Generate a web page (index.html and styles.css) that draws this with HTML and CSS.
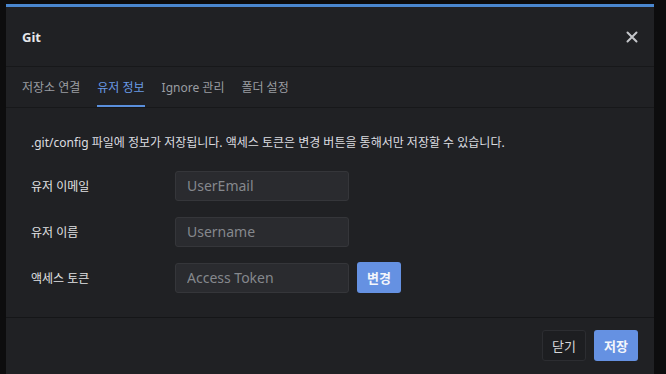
FILE: index.html
```html
<!DOCTYPE html>
<html lang="ko">
<head>
<meta charset="utf-8">
<link rel="stylesheet" href="styles.css">
</head>
<body>
<div class="modal">
  <div class="header">
    <span class="title">Git</span>
    <button class="close" aria-label="닫기">
      <svg width="12" height="12" viewBox="0 0 12 12"><path d="M1.5 1.5L10.5 10.5M10.5 1.5L1.5 10.5" stroke="#c4c6ca" stroke-width="2" stroke-linecap="round"/></svg>
    </button>
  </div>
  <div class="tabs">
    <div class="tab">저장소 연결</div>
    <div class="tab active">유저 정보</div>
    <div class="tab">Ignore 관리</div>
    <div class="tab">폴더 설정</div>
  </div>
  <div class="body">
    <p class="desc">.git/config 파일에 정보가 저장됩니다. 액세스 토큰은 변경 버튼을 통해서만 저장할 수 있습니다.</p>
    <div class="row">
      <label class="label">유저 이메일</label>
      <input class="input" placeholder="UserEmail">
    </div>
    <div class="row">
      <label class="label">유저 이름</label>
      <input class="input" placeholder="Username">
    </div>
    <div class="row">
      <label class="label">액세스 토큰</label>
      <input class="input" placeholder="Access Token">
      <button class="btn primary">변경</button>
    </div>
  </div>
  <div class="footer">
    <button class="btn ghost">닫기</button>
    <button class="btn primary">저장</button>
  </div>
</div>
</body>
</html>
```
FILE: styles.css
```css
* { box-sizing: border-box; }
html, body { margin: 0; padding: 0; }
body {
  background: #0d0d0e;
  height: 374px;
  overflow: hidden;
  font-family: "Noto Sans", "Noto Sans CJK KR", sans-serif;
  padding: 4px 12px 0 6px;
}
.modal {
  width: 648px;
  height: 370px;
  background: #202124;
  border-top: 3px solid #4a87cf;
  display: flex;
  flex-direction: column;
  overflow: hidden;
}
.header {
  height: 60px;
  flex: none;
  display: flex;
  align-items: center;
  justify-content: space-between;
  padding: 0 16px;
  border-bottom: 1px solid #17181a;
}
.title {
  color: #e6e7e9;
  font-size: 13px;
  font-weight: 700;
}
.close {
  background: none;
  border: 0;
  padding: 0;
  width: 12px;
  height: 12px;
  display: flex;
}
.tabs {
  height: 41px;
  flex: none;
  display: flex;
  gap: 17px;
  padding: 0 16px;
  border-bottom: 1px solid #17181a;
}
.tab {
  font-size: 12px;
  color: #9a9da2;
  display: flex;
  align-items: center;
  border-bottom: 2px solid transparent;
  padding-top: 2px;
}
.tab.active {
  color: #6a9be6;
  border-bottom-color: #5a8fdc;
}
.body {
  height: 209px;
  flex: none;
  padding: 25px 25px 0;
  display: flex;
  flex-direction: column;
  gap: 17px;
}
.desc {
  margin: 0 0 1px;
  font-size: 12px;
  color: #dcdde0;
  line-height: 20px;
}
.row {
  display: flex;
  align-items: center;
  height: 29px;
}
.label {
  width: 144px;
  font-size: 12px;
  color: #e0e1e3;
}
.input {
  width: 174px;
  height: 30px;
  background: #2a2b2f;
  border: 1px solid #35363a;
  border-radius: 3px;
  color: #e0e1e3;
  font-family: inherit;
  font-size: 14px;
  padding: 0 11px;
  outline: none;
}
.input::placeholder { color: #85888d; }
.row .btn { margin-left: 8px; }
.btn {
  font-family: inherit;
  font-size: 13px;
  font-weight: 700;
  width: 44px;
  height: 31px;
  border-radius: 3px;
  border: 1px solid transparent;
  padding: 0;
}
.primary {
  background: #6591e2;
  color: #f4f6fb;
}
.ghost {
  background: #1d1e21;
  border-color: #2c2d31;
  color: #d5d6d9;
  font-weight: 400;
}
.footer {
  border-top: 1px solid #151618;
  display: flex;
  justify-content: flex-end;
  gap: 8px;
  padding: 12px 16px;
}
```
